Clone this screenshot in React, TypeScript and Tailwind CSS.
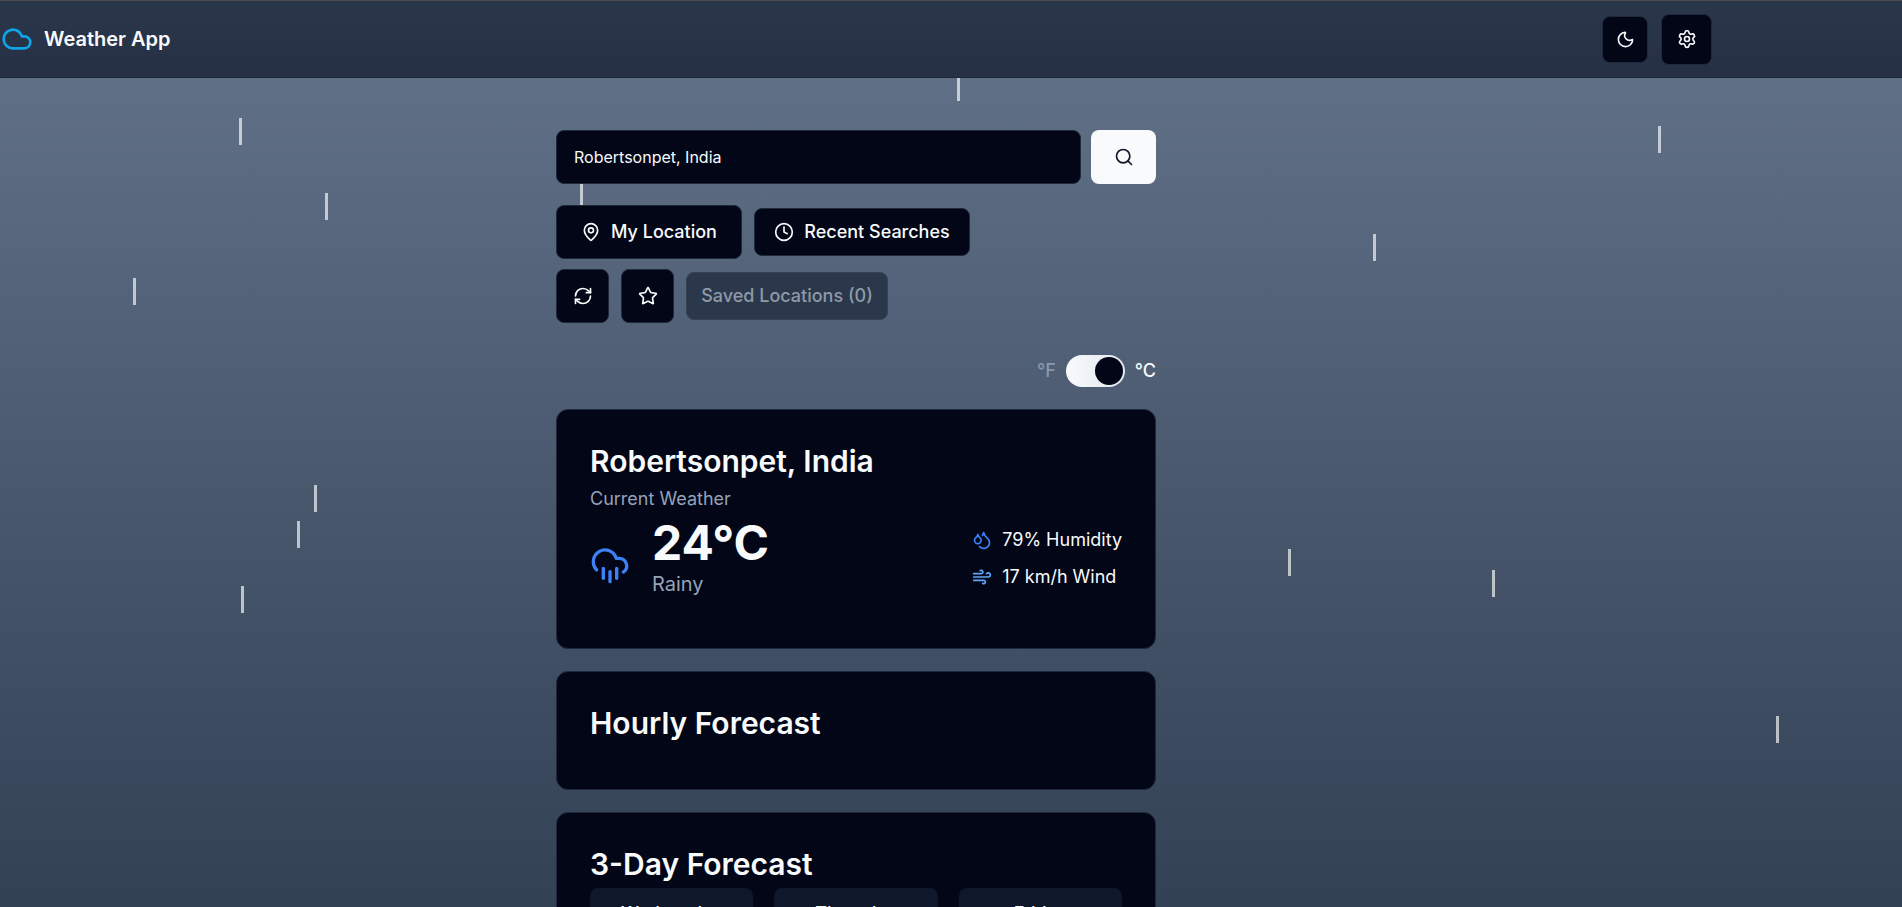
import { Clock, Cloud, CloudRain, Droplets, MapPin, Moon, RefreshCw, Search, Settings, Star, Wind } from "lucide-react";

// [left, top] of each falling streak
const drops = [
  [957, 74],
  [239, 118],
  [325, 193],
  [133, 278],
  [580, 180],
  [314, 485],
  [297, 521],
  [241, 586],
  [1658, 126],
  [1373, 234],
  [1288, 549],
  [1492, 570],
  [1776, 716],
];

const days = ["Wednesday", "Thursday", "Friday"];

const App = () => {
  return (
    <div className="relative h-[907px] overflow-hidden bg-gradient-to-b from-[#64748b] to-[#334155] font-['Inter',sans-serif] text-[#f8fafc]">
      {drops.map(([left, top], key) => (
        <div
          key={key}
          className="absolute h-[27px] w-[3px] bg-white/65"
          style={{ left, top }}
        />
      ))}

      <header className="relative h-[78px] border-t border-b border-t-[#4b4b4b] border-b-[#1e293b] bg-gradient-to-b from-[#2a374b] to-[#263044]">
        <div className="flex h-full w-[1712px] items-center justify-between">
          <div className="flex items-center gap-[11px] pl-[1px]">
            <Cloud className="h-8 w-8 text-[#0ea5e9]" strokeWidth={2} />
            <span className="text-xl font-semibold">Weather App</span>
          </div>
          <div className="flex items-center gap-[13px]">
            <button className="flex h-[47px] w-[46px] items-center justify-center rounded-lg border border-[#1e293b] bg-[#020617]">
              <Moon className="h-[19px] w-[19px]" />
            </button>
            <button className="flex h-[51px] w-[51px] items-center justify-center rounded-lg border border-[#1e293b] bg-[#020617]">
              <Settings className="h-5 w-5" />
            </button>
          </div>
        </div>
      </header>

      <main className="relative w-[1712px] pt-[52px]">
        <div className="mx-auto flex w-[600px] flex-col">
          <div className="flex gap-[10px]">
            <div className="flex h-[54px] flex-1 items-center rounded-lg border border-[#1e293b] bg-[#020617] px-[17px] text-base">
              Robertsonpet, India
            </div>
            <button className="flex h-[54px] w-[65px] items-center justify-center rounded-lg bg-[#f8fafc] text-[#0f172a]">
              <Search className="h-5 w-5" />
            </button>
          </div>

          <div className="mt-[21px] flex h-[54px] items-center gap-3">
            <button className="flex h-[54px] w-[186px] items-center justify-center gap-[10px] rounded-lg border border-[#1e293b] bg-[#020617] text-lg font-medium">
              <MapPin className="h-5 w-5" />
              My Location
            </button>
            <button className="flex h-12 w-[216px] items-center justify-center gap-[10px] rounded-lg border border-[#1e293b] bg-[#020617] text-lg font-medium">
              <Clock className="h-5 w-5" />
              Recent Searches
            </button>
          </div>

          <div className="mt-[10px] flex h-[54px] items-center gap-3">
            <button className="flex h-[54px] w-[53px] items-center justify-center rounded-lg border border-[#1e293b] bg-[#020617]">
              <RefreshCw className="h-5 w-5" />
            </button>
            <button className="flex h-[54px] w-[53px] items-center justify-center rounded-lg border border-[#1e293b] bg-[#020617]">
              <Star className="h-5 w-5" />
            </button>
            <button className="flex h-12 w-[202px] items-center justify-center rounded-lg border border-[#334155] bg-[#2b384c] text-lg font-medium text-[#8f99a8]">
              Saved Locations (0)
            </button>
          </div>

          <div className="mt-8 flex h-8 items-center justify-end gap-[10px] text-lg font-medium">
            <span className="text-[#8d97a8]">°F</span>
            <div className="flex h-8 w-[59px] items-center justify-end rounded-full bg-gradient-to-r from-[#f8fafc] to-[#e2e8f0] pr-[2px]">
              <div className="h-7 w-7 rounded-full bg-[#020617]" />
            </div>
            <span>°C</span>
          </div>

          <section className="mt-[22px] h-[240px] rounded-xl border border-[#1e293b] bg-[#020617] p-[33px]">
            <h2 className="text-3xl leading-9 font-semibold">Robertsonpet, India</h2>
            <p className="mt-[6px] text-lg leading-7 text-[#94a3b8]">Current Weather</p>
            <div className="mt-[6px] flex items-center justify-between">
              <div className="flex items-center gap-[22px]">
                <CloudRain className="mt-3 h-10 w-10 text-[#3b82f6]" />
                <div>
                  <div className="text-5xl leading-[48px] font-bold">24°C</div>
                  <div className="mt-[3px] text-xl text-[#94a3b8]">Rainy</div>
                </div>
              </div>
              <div className="flex flex-col gap-[9px] text-lg">
                <div className="flex items-center gap-[10px]">
                  <Droplets className="h-5 w-5 text-[#3b82f6]" />
                  79% Humidity
                </div>
                <div className="flex items-center gap-[10px]">
                  <Wind className="h-5 w-5 text-[#60a5fa]" />
                  17 km/h Wind
                </div>
              </div>
            </div>
          </section>

          <section className="mt-[22px] h-[119px] rounded-xl border border-[#1e293b] bg-[#020617] p-[33px]">
            <h2 className="text-3xl leading-9 font-semibold">Hourly Forecast</h2>
          </section>

          <section className="mt-[22px] rounded-xl border border-[#1e293b] bg-[#020617] px-[33px] pt-[33px]">
            <h2 className="text-3xl leading-9 font-semibold">3-Day Forecast</h2>
            <div className="mt-[6px] grid grid-cols-3 gap-[21px]">
              {days.map((day) => (
                <div key={day} className="h-[120px] rounded-lg bg-[#0f172a] pt-3 text-center text-lg font-medium">
                  {day}
                </div>
              ))}
            </div>
          </section>
        </div>
      </main>
    </div>
  );
};

export default App;
